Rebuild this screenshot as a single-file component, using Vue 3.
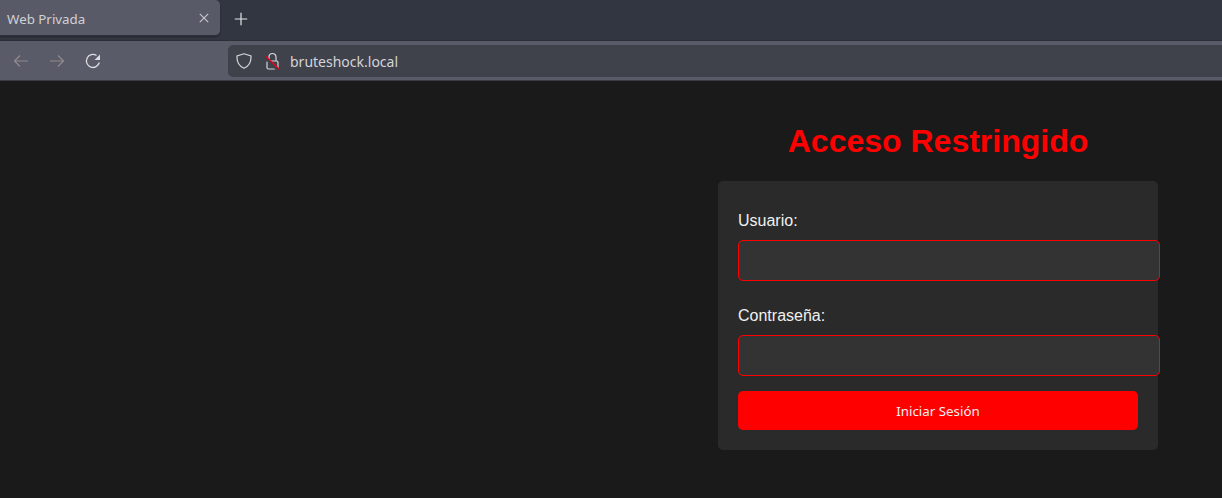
<script setup>
</script>

<template>
  <div class="window">
    <div class="tabbar">
      <div class="tab">
        <span class="tab-title">Web Privada</span>
        <svg class="tab-close" width="10" height="10" viewBox="0 0 10 10"><path d="M.8.8l8.400 8.400M9.200.8L.8 9.200" stroke="#c9cad0" stroke-width="1.100" fill="none"/></svg>
      </div>
      <svg class="new-tab" width="14" height="14" viewBox="0 0 14 14"><path d="M7 .8v12.400M.8 7h12.400" stroke="#e4e5ea" stroke-width="1.200" fill="none"/></svg>
    </div>
    <div class="toolbar">
      <div class="nav">
        <svg width="16" height="16" viewBox="0 0 16 16"><path d="M15 8H1.500M7 2.500L1.500 8 7 13.500" stroke="#93898c" stroke-width="1.200" fill="none"/></svg>
        <svg width="16" height="16" viewBox="0 0 16 16"><path d="M1 8h13.500M9 2.500L14.500 8 9 13.500" stroke="#93898c" stroke-width="1.200" fill="none"/></svg>
        <svg width="16" height="16" viewBox="0 0 16 16"><path d="M14.300 9.500A6.500 6.500 0 1 1 11.500 2.500" stroke="#dcdde2" stroke-width="1.300" fill="none"/><path d="M15 1.500v5.500H9.500z" fill="#dcdde2"/></svg>
      </div>
      <div class="urlbar">
        <svg width="16" height="16" viewBox="0 0 16 16"><path d="M8 .8L15 3C15.300 9 12.800 13.200 8 15.300 3.200 13.200.7 9 1 3z" stroke="#d5d6dc" stroke-width="1.200" fill="none"/></svg>
        <svg class="lock" width="16" height="18" viewBox="0 0 16 18"><path d="M5 9V5a3.500 3.500 0 0 1 7 0v4" stroke="#d5d6dc" stroke-width="1.200" fill="none"/><rect x="3" y="9" width="11" height="8" rx="1.500" stroke="#d5d6dc" stroke-width="1.200" fill="none"/><path d="M1 5.500L14 18" stroke="#3f424a" stroke-width="3"/><path d="M2 4.500L15 17" stroke="#e8001c" stroke-width="1.300"/></svg>
        <span class="url">bruteshock.local</span>
      </div>
    </div>
    <main class="page">
      <div class="column">
        <h1>Acceso Restringido</h1>
        <form class="card" @submit.prevent>
          <label for="u">Usuario:</label>
          <input id="u" type="text" />
          <label for="p">Contraseña:</label>
          <input id="p" type="password" />
          <button type="submit">Iniciar Sesión</button>
        </form>
      </div>
    </main>
  </div>
</template>

<style>
html, body { margin: 0; background: #1a1a1a; }
</style>

<style scoped>
.window { width: 1222px; height: 498px; overflow: hidden; display: flex; flex-direction: column; background: #1a1a1a; font-family: "Noto Sans", sans-serif; }
.tabbar { height: 41px; box-sizing: border-box; background: #323641; display: flex; align-items: flex-start; border-bottom: 1px solid #2b2d37; flex: none; }
.tab { width: 220px; height: 36px; box-sizing: border-box; background: #595a67; border-radius: 0 5px 5px 0; border-bottom: 1px solid #2f303b; display: flex; align-items: center; justify-content: space-between; padding: 2px 11px 0 7px; box-shadow: 0 1px 2px rgba(0,0,0,.3); }
.tab-title { font-size: 13.33px; color: #d0d1d6; }
.tab-close { display: block; margin-top: -2px; }
.new-tab { margin: 12px 0 0 14px; }
.toolbar { height: 40px; box-sizing: border-box; background: #5a5b68; border-bottom: 1px solid #3a3b46; display: flex; align-items: flex-start; flex: none; padding-top: 4px; }
.nav { width: 228px; height: 32px; box-sizing: border-box; padding-left: 13px; display: flex; gap: 20px; align-items: center; flex: none; }
.nav svg { display: block; }
.urlbar { flex: 1; height: 32px; background: #3f424a; border-radius: 5px 0 0 5px; display: flex; align-items: center; padding-left: 8px; color: #d8d9de; }
.urlbar svg { display: block; flex: none; }
.lock { margin-left: 12px; }
.url { margin-left: 10px; font-size: 14px; color: #d3d4da; }
.page { flex: 1; display: flex; justify-content: flex-end; padding-right: 64px; }
.column { width: 440px; font-family: "Liberation Sans", Arial, sans-serif; }
h1 { margin: 42px 0 21px; font-size: 32px; line-height: 37px; font-weight: 700; text-align: center; color: #ff0000; }
.card { box-sizing: border-box; height: 269px; padding: 20px; background: #2a2a2a; border-radius: 5px; display: flex; flex-direction: column; align-items: flex-start; }
label { font-size: 16px; line-height: 18px; color: #f0f0f0; margin-top: 11px; margin-bottom: 10px; }
input { width: 422px; height: 41px; box-sizing: border-box; flex: none; background: #333333; border: 1px solid #ff0000; border-radius: 5px; padding: 10px; margin: 0 0 15px; outline: none; color: #f0f0f0; font-size: 14px; }
button { width: 400px; height: 39px; flex: none; background: #ff0000; color: #f0f0f0; border: none; border-radius: 5px; font-family: "Noto Sans", sans-serif; font-size: 13.33px; padding: 0; }
</style>
